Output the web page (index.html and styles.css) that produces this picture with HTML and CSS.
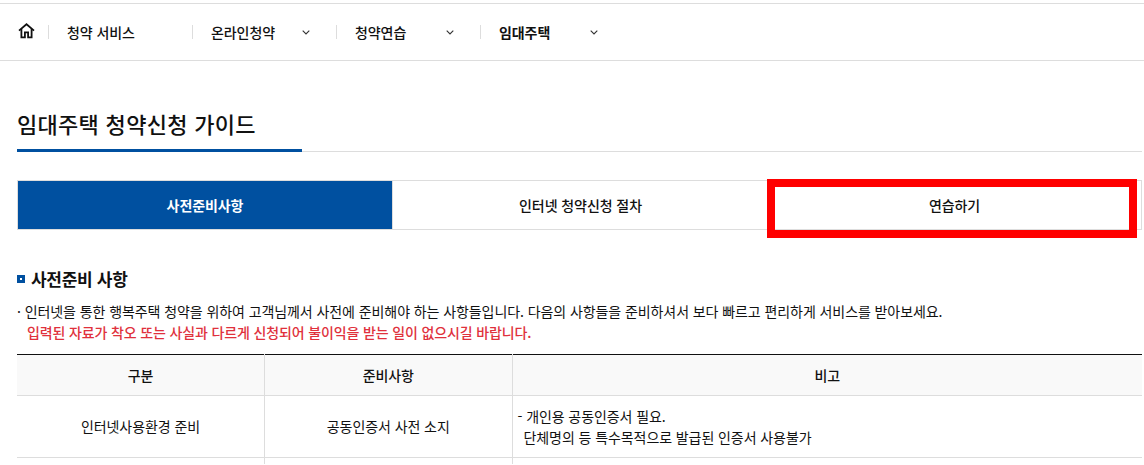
FILE: index.html
```html
<!DOCTYPE html>
<html lang="ko">
<head>
    <meta charset="UTF-8">
    <meta name="viewport" content="width=device-width, initial-scale=1.0">
    <title>임대주택 청약신청 가이드</title>
    <link rel="stylesheet" href="styles.css">
</head>
<body>

<nav class="topnav">
    <a class="nav-home" href="#" aria-label="홈">
        <svg width="17" height="16" viewBox="0 0 17 16" fill="none" stroke="#111" stroke-width="1.8">
            <path d="M1 7.6 8.5 1.2 16 7.6"/>
            <path d="M3.4 6v8.4h3.5V9.4h3.2v5h3.5V6"/>
        </svg>
    </a>
    <a class="nav-item" href="#">청약 서비스</a>
    <a class="nav-item" href="#">온라인청약<svg class="chev" width="8" height="5" viewBox="0 0 8 5"><path d="M.7.7 4 4l3.3-3.3" fill="none" stroke="#333" stroke-width="1.1"/></svg></a>
    <a class="nav-item" href="#">청약연습<svg class="chev" width="8" height="5" viewBox="0 0 8 5"><path d="M.7.7 4 4l3.3-3.3" fill="none" stroke="#333" stroke-width="1.1"/></svg></a>
    <a class="nav-item nav-current" href="#">임대주택<svg class="chev" width="8" height="5" viewBox="0 0 8 5"><path d="M.7.7 4 4l3.3-3.3" fill="none" stroke="#333" stroke-width="1.1"/></svg></a>
</nav>

<main class="content">
    <h1 class="page-title"><span>임대주택 청약신청 가이드</span></h1>

    <div class="tabs">
        <a class="tab active" href="#">사전준비사항</a>
        <a class="tab" href="#">인터넷 청약신청 절차</a>
        <a class="tab highlighted" href="#">연습하기</a>
    </div>

    <h2 class="section-title">사전준비 사항</h2>
    <p class="notice">· 인터넷을 통한 행복주택 청약을 위하여 고객님께서 사전에 준비해야 하는 사항들입니다. 다음의 사항들을 준비하셔서 보다 빠르고 편리하게 서비스를 받아보세요.</p>
    <p class="notice warn">입력된 자료가 착오 또는 사실과 다르게 신청되어 불이익을 받는 일이 없으시길 바랍니다.</p>

    <div class="table-wrap">
        <table class="guide-table">
            <thead>
                <tr>
                    <th class="col-a">구분</th>
                    <th class="col-b">준비사항</th>
                    <th>비고</th>
                </tr>
            </thead>
            <tbody>
                <tr>
                    <td class="center">인터넷사용환경 준비</td>
                    <td class="center">공동인증서 사전 소지</td>
                    <td>- 개인용 공동인증서 필요.<br><span class="indent">단체명의 등 특수목적으로 발급된 인증서 사용불가</span></td>
                </tr>
                <tr>
                    <td class="center"></td>
                    <td class="center"></td>
                    <td></td>
                </tr>
            </tbody>
        </table>
    </div>
</main>

</body>
</html>
```

FILE: styles.css
```css
* {
    box-sizing: border-box;
}

html, body {
    height: 465px;
    overflow: hidden;
}

body {
    margin: 0;
    padding-top: 3px;
    background-color: #fff;
    color: #111;
    font-family: "Noto Sans CJK KR", "Noto Sans", sans-serif;
    font-size: 14px;
    letter-spacing: -0.08px;
}

a {
    color: inherit;
    text-decoration: none;
}

.topnav {
    display: flex;
    align-items: center;
    height: 58px;
    padding-left: 18px;
    border-top: 1px solid #ddd;
    border-bottom: 1px solid #ddd;
}

.nav-home {
    display: flex;
    width: 30px;
    height: 16px;
    margin-top: -2px;
}

.nav-item {
    display: flex;
    align-items: center;
    justify-content: space-between;
    width: 144px;
    height: 14px;
    padding: 0 26px 0 18px;
    border-left: 1px solid #ddd;
    font-weight: 500;
    line-height: 14px;
}

.nav-current {
    font-weight: 700;
}

.content {
    padding: 0 2px 0 17px;
}

.page-title {
    height: 91px;
    margin: 0;
    padding-top: 45px;
    border-bottom: 1px solid #ddd;
    color: #111;
    font-size: 22px;
    font-weight: 500;
    letter-spacing: 0.3px;
    line-height: 34px;
}

.page-title span {
    display: block;
    width: 285px;
    height: 46px;
    border-bottom: 3px solid #0050a0;
}

.tabs {
    display: flex;
    height: 50px;
    margin-top: 28px;
    border: 1px solid #ddd;
}

.tab {
    display: flex;
    flex: 0 0 375px;
    align-items: center;
    justify-content: center;
    font-weight: 500;
}

.tab.active {
    border-right: 1px solid #ddd;
    background-color: #0050a0;
    color: #fff;
    font-weight: 700;
}

.tab.highlighted {
    position: relative;
    flex: 1;
}

/* red marker drawn over the tab */
.tab.highlighted::after {
    content: "";
    box-sizing: border-box;
    position: absolute;
    top: -2px;
    left: -1px;
    width: 370px;
    height: 59px;
    border: 8px solid #f00;
}

.section-title {
    position: relative;
    margin: 38px 0 0;
    padding-left: 14px;
    color: #111;
    font-size: 17px;
    font-weight: 700;
    letter-spacing: -0.3px;
    line-height: 22px;
}

/* square bullet */
.section-title::before {
    content: "";
    box-sizing: border-box;
    position: absolute;
    top: 7px;
    left: 0;
    width: 8px;
    height: 8px;
    border: 3px solid #0050a0;
    background-color: #fff;
}

.notice {
    margin: 11px 0 0;
    line-height: 20px;
}

.notice.warn {
    margin-top: 1px;
    padding-left: 10px;
    color: #e0313c;
    font-weight: 500;
    letter-spacing: -0.14px;
}

.table-wrap {
    height: 110px;
    margin-top: 12px;
    overflow: hidden;
}

.guide-table {
    width: 1125px;
    border-collapse: collapse;
    border-top: 1px solid #111;
    table-layout: fixed;
}

.guide-table th,
.guide-table td {
    border-right: 1px solid #ddd;
    border-bottom: 1px solid #ddd;
}

.guide-table th:last-child,
.guide-table td:last-child {
    border-right: 0;
}

.guide-table th {
    height: 41px;
    background-color: #f9f9f9;
    font-weight: 500;
}

.guide-table td {
    height: 62px;
    padding: 0 5px;
    line-height: 21px;
}

.col-a,
.col-b {
    width: 247.5px;
}

.indent {
    padding-left: 6px;
}

.center {
    text-align: center;
}
```
